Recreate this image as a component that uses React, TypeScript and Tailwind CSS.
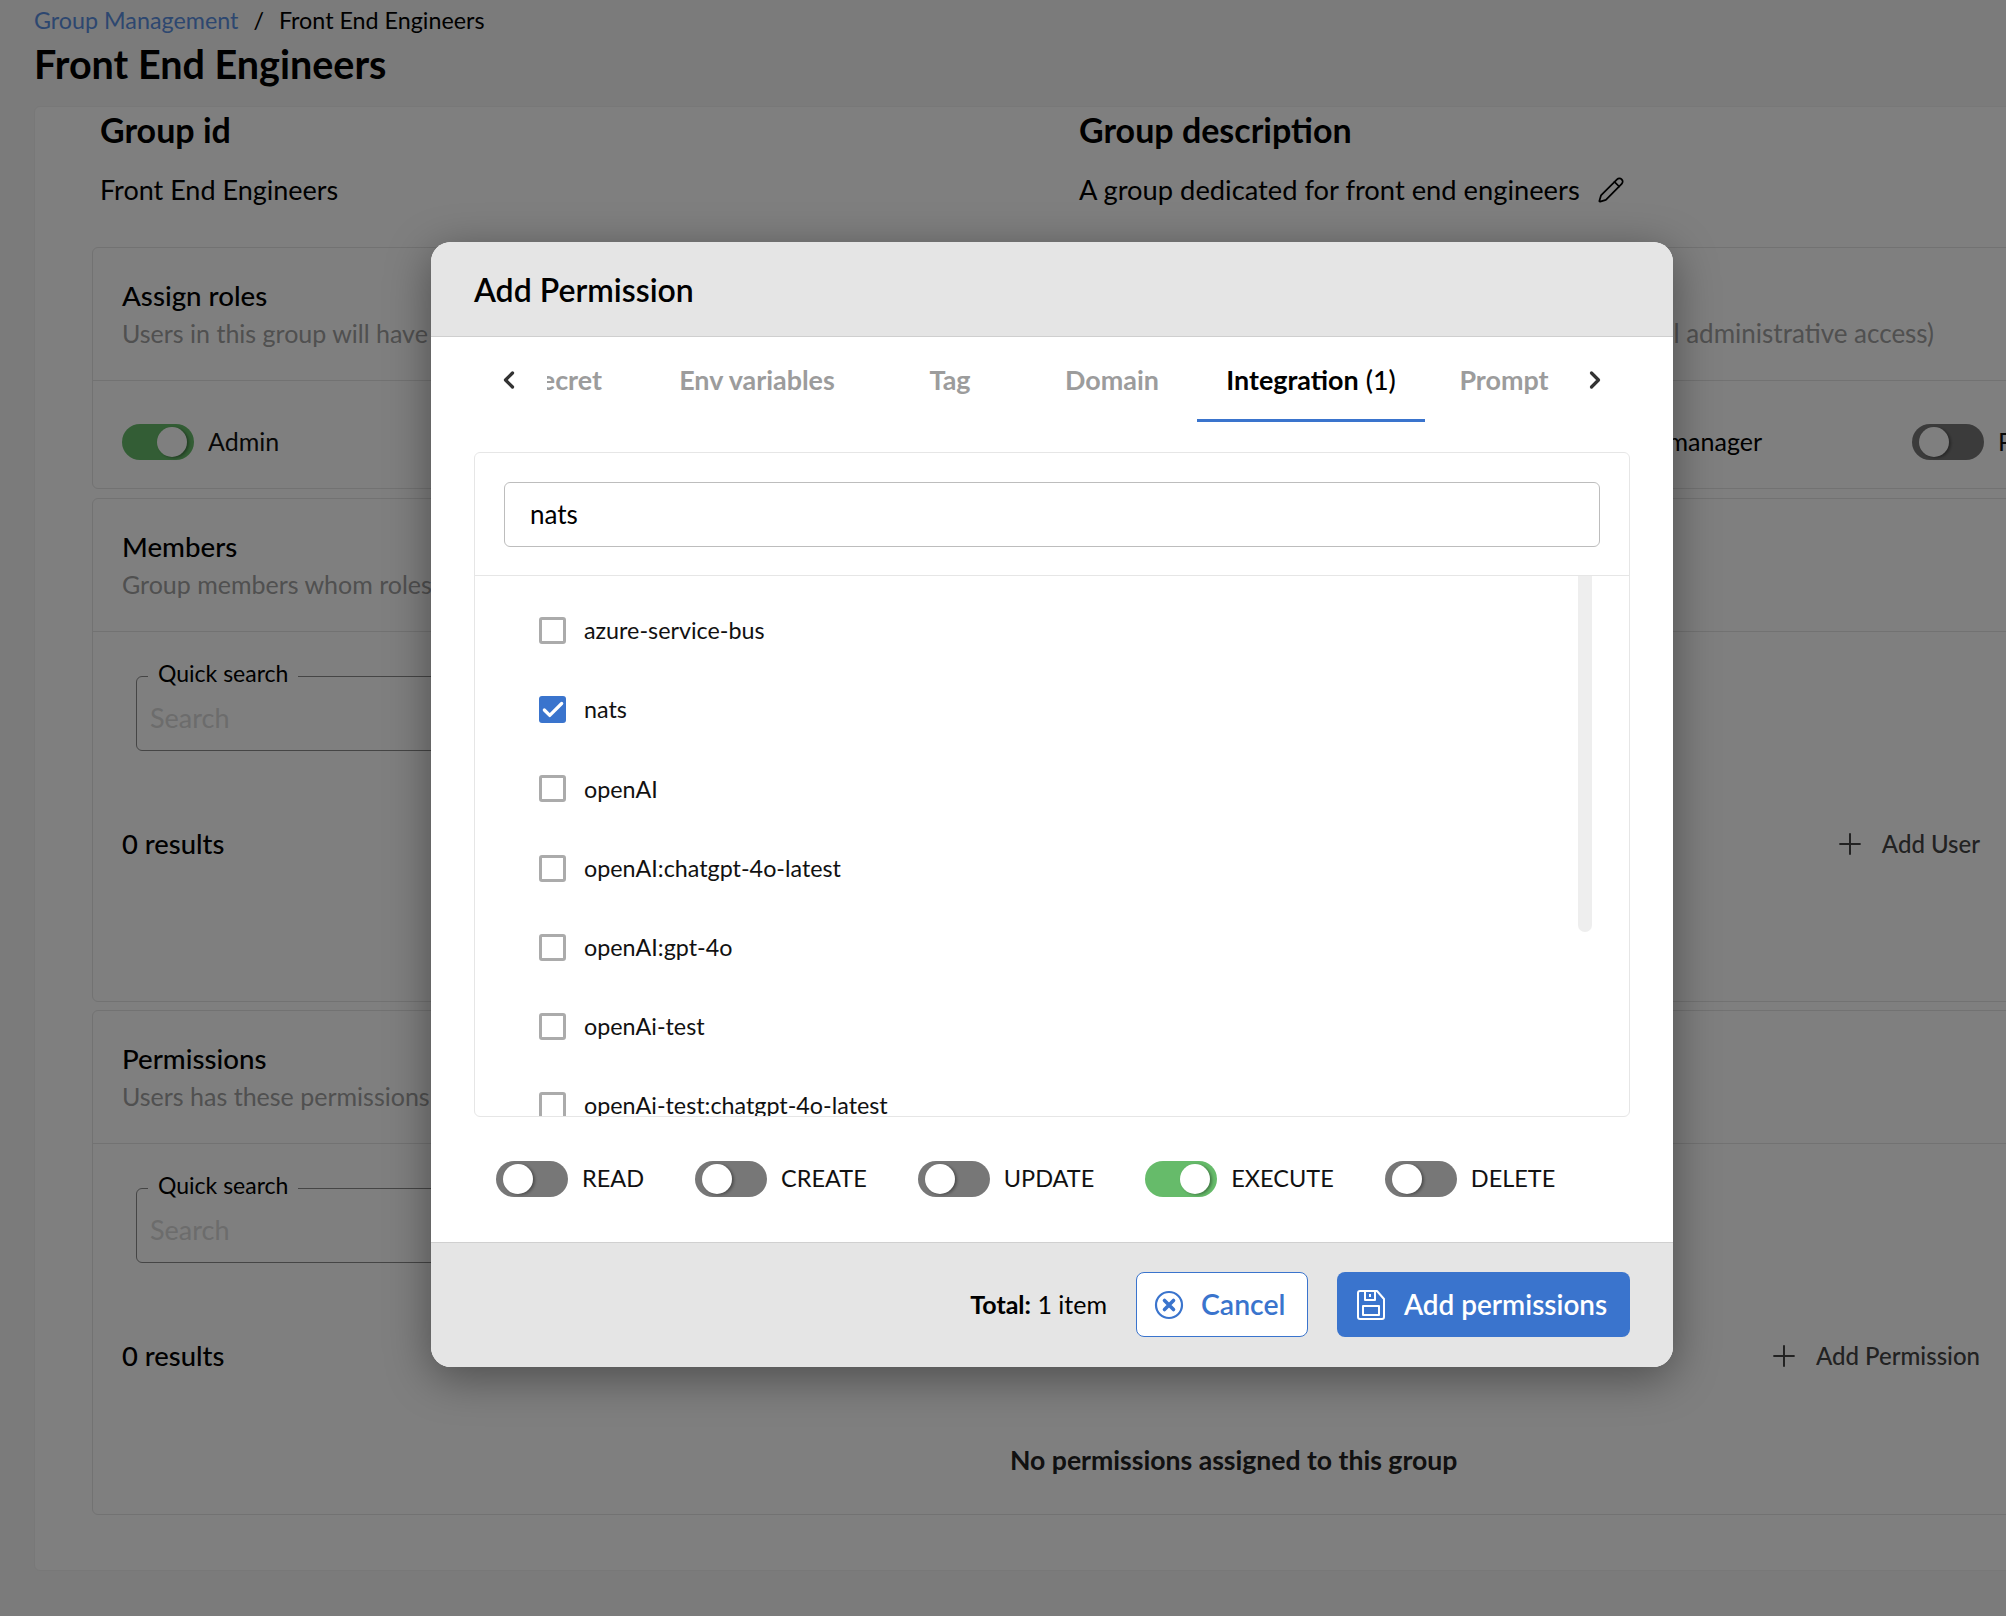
import { Check, ChevronLeft, ChevronRight, Pencil, Plus } from "lucide-react";

function Toggle({ on = false, label, size = "text-[23.5px]" }: { on?: boolean; label: string; size?: string }) {
  return (
    <div className="flex items-center gap-[14px] whitespace-nowrap">
      <span
        className={
          on
            ? "flex h-[36px] w-[72px] shrink-0 items-center justify-end rounded-full bg-[#66bb6a] px-[7px]"
            : "flex h-[36px] w-[72px] shrink-0 items-center justify-start rounded-full bg-[#777777] px-[7px]"
        }
      >
        <span className="h-[30px] w-[30px] rounded-full bg-white shadow-[2px_1px_3px_rgba(0,0,0,0.35)]" />
      </span>
      <span className={`${size} text-[#111]`}>{label}</span>
    </div>
  );
}

function SectionHead({ title, children }: { title: string; children: React.ReactNode }) {
  return (
    <div className="h-[133px] border-b border-[#e4e4e4] pt-[30px] pl-[29px]">
      <h3 className="h-[37px] text-[27.7px] leading-[36px] font-medium text-black">{title}</h3>
      <div className="h-[36px] text-[25px] leading-[36px] text-[#a0a0a0]">{children}</div>
    </div>
  );
}

function QuickSearch() {
  return (
    <fieldset className="mt-[29px] ml-[43px] h-[90px] w-[1400px] rounded-[6px] border border-[#8a8a8a]">
      <legend className="ml-[11px] px-[10px] pb-[6px] text-[23px] leading-[24px] text-black">Quick search</legend>
      <input
        placeholder="Search"
        className="mt-[2px] ml-[13px] h-[48px] w-[600px] text-[27px] outline-none placeholder:text-[#d8d8d8]"
      />
    </fieldset>
  );
}

function ResultsRow({ action }: { action: string }) {
  return (
    <div className="flex h-[40px] items-center justify-between pr-[71px] pl-[29px]">
      <span className="text-[27.4px] font-medium text-black">0 results</span>
      <span className="flex items-center gap-[15px] text-[24px] font-medium text-[#444]">
        <Plus size={34} strokeWidth={1.4} />
        {action}
      </span>
    </div>
  );
}

const tabs = [
  { name: "Secret", cls: "w-[94px] justify-end pr-[39px]" },
  { name: "Env variables", cls: "w-[232px] justify-center" },
  { name: "Tag", cls: "w-[154px] justify-center" },
  { name: "Domain", cls: "w-[170px] justify-center" },
  { name: "Integration", count: "(1)", cls: "w-[228px] justify-center gap-[7px] border-[#3a74cd] text-black", active: true },
  { name: "Prompt", cls: "w-[158px] justify-center" },
];

const integrations = [
  "azure-service-bus",
  "nats",
  "openAI",
  "openAI:chatgpt-4o-latest",
  "openAI:gpt-4o",
  "openAi-test",
  "openAi-test:chatgpt-4o-latest",
];

export default function App() {
  return (
    <div className="relative h-[1616px] w-[2006px] overflow-hidden bg-[#f6f6f6] [font-family:Lato,sans-serif]">
      <div className="h-[106px] pt-[6px] pl-[34px]">
        <div className="flex h-[28px] items-center text-[23.3px]">
          <span className="text-[#5b8fe0]">Group Management</span>
          <span className="mx-[15px] text-black">/</span>
          <span className="text-black">Front End Engineers</span>
        </div>
        <h1 className="mt-[10px] h-[40px] text-[39.5px] leading-[40px] font-bold text-black">Front End Engineers</h1>
      </div>

      <div className="ml-[34px] h-[1465px] w-[2100px] rounded-[6px] border border-[#f0f0f0] bg-white pl-[57px]">
        <div className="flex h-[140px]">
          <div className="w-[987px] pl-[8px]">
            <h2 className="h-[46px] text-[34px] leading-[46px] font-bold text-black">Group id</h2>
            <p className="mt-[19px] text-[27px] leading-[36px] text-black">Front End Engineers</p>
          </div>
          <div>
            <h2 className="h-[46px] text-[34px] leading-[46px] font-bold text-black">Group description</h2>
            <p className="mt-[19px] flex items-center gap-[17px] text-[27.3px] leading-[36px] text-black">
              A group dedicated for front end engineers
              <Pencil size={28} strokeWidth={1.5} />
            </p>
          </div>
        </div>

        <section className="h-[242px] w-[1960px] rounded-[6px] border border-[#e4e4e4]">
          <SectionHead title="Assign roles">
            <div className="flex w-[1812px] justify-between">
              <span>Users in this group will have these roles and permissions</span>
              <span className="text-[26px]">(with full administrative access)</span>
            </div>
          </SectionHead>
          <div className="flex h-[108px] items-center pt-[14px] pl-[29px]">
            <div className="flex w-[1640px] shrink-0 items-center justify-between">
              <Toggle on label="Admin" size="text-[25px]" />
              <span className="text-[25px] text-black">User manager</span>
            </div>
            <div className="ml-[150px] shrink-0">
              <Toggle label="Prompt manager" size="text-[25px]" />
            </div>
          </div>
        </section>

        <section className="mt-[9px] h-[504px] w-[1960px] rounded-[6px] border border-[#e4e4e4]">
          <SectionHead title="Members">Group members whom roles and permissions apply to</SectionHead>
          <QuickSearch />
          <div className="mt-[73px]">
            <ResultsRow action="Add User" />
          </div>
        </section>

        <section className="mt-[8px] h-[505px] w-[1960px] rounded-[6px] border border-[#e4e4e4]">
          <SectionHead title="Permissions">Users has these permissions in addition to the roles</SectionHead>
          <QuickSearch />
          <div className="mt-[73px]">
            <ResultsRow action="Add Permission" />
          </div>
          <p className="mt-[64px] ml-[917px] text-[26.6px] leading-[40px] font-bold text-[#222]">
            No permissions assigned to this group
          </p>
        </section>
      </div>

      <div className="absolute inset-0 bg-black/50" />

      <div className="absolute top-[242px] left-[431px] flex h-[1125px] w-[1242px] flex-col overflow-hidden rounded-[20px] bg-white shadow-[0_10px_45px_rgba(0,0,0,0.4)]">
        <div className="flex h-[95px] items-center border-b border-[#cfcfcf] bg-[#e5e5e5] pt-[2px] pl-[43px]">
          <h2 className="text-[32px] font-semibold text-black">Add Permission</h2>
        </div>

        <div className="flex h-[87px] items-start pl-[67px]">
          <div className="flex h-[85px] w-[22px] items-center">
            <ChevronLeft size={28} strokeWidth={2.8} className="-ml-[3px] shrink-0 text-[#333]" />
          </div>
          <div className="ml-[27px] flex w-[1036px] overflow-hidden">
            {tabs.map((tab) => (
              <div
                key={tab.name}
                className={`flex h-[85px] shrink-0 items-center border-b-[3px] pt-[4px] text-[26.9px] font-bold whitespace-nowrap ${
                  tab.active ? "" : "border-transparent text-[#9c9c9c]"
                } ${tab.cls}`}
              >
                {tab.name}
                {tab.count && <span className="font-medium">{tab.count}</span>}
              </div>
            ))}
          </div>
          <div className="flex h-[85px] w-[22px] items-center">
            <ChevronRight size={28} strokeWidth={2.8} className="-ml-[2px] shrink-0 text-[#333]" />
          </div>
        </div>

        <div className="mx-[43px] mt-[28px] h-[665px] overflow-hidden rounded-[6px] border border-[#e6e6e6]">
          <div className="flex h-[123px] items-center border-b border-[#e6e6e6] px-[29px]">
            <input
              defaultValue="nats"
              className="h-[65px] w-full rounded-[6px] border border-[#bdbdbd] px-[25px] text-[26px] text-black outline-none"
            />
          </div>
          <div className="relative h-[541px] overflow-hidden pt-[15px] pl-[64px]">
            {integrations.map((name) => (
              <div key={name} className="flex h-[79.2px] items-center gap-[18px]">
                {name === "nats" ? (
                  <span className="flex h-[27px] w-[27px] items-center justify-center rounded-[3px] bg-[#3a74cd]">
                    <Check size={26} strokeWidth={3} className="text-white" />
                  </span>
                ) : (
                  <span className="h-[27px] w-[27px] rounded-[3px] border-[3px] border-[#ababab]" />
                )}
                <span className="text-[23.3px] text-[#111]">{name}</span>
              </div>
            ))}
            <div className="absolute top-0 right-[37px] h-[356px] w-[14px] rounded-b-full bg-[#eeeeee]" />
          </div>
        </div>

        <div className="flex h-[125px] items-center gap-[51px] pb-[2px] pl-[65px]">
          <Toggle label="READ" />
          <Toggle label="CREATE" />
          <Toggle label="UPDATE" />
          <Toggle on label="EXECUTE" />
          <Toggle label="DELETE" />
        </div>

        <div className="flex h-[125px] items-center justify-end border-t border-[#d0d0d0] bg-[#e5e5e5] pr-[43px] pb-[1px]">
          <span className="text-[25px] text-black">
            <b className="font-bold">Total:</b> 1 item
          </span>
          <button className="ml-[29px] flex h-[65px] w-[172px] items-center gap-[17px] rounded-[8px] border border-[#3a74cd] bg-white pl-[17px] text-[28.4px] font-semibold text-[#3a74cd]">
            <svg width="30" height="30" viewBox="0 0 30 30" fill="none" stroke="currentColor">
              <circle cx="15" cy="15" r="13" strokeWidth="2.2" />
              <path d="M10.5 10.5l9 9M19.5 10.5l-9 9" strokeWidth="3.6" strokeLinecap="round" />
            </svg>
            Cancel
          </button>
          <button className="ml-[29px] flex h-[65px] w-[293px] items-center gap-[18px] rounded-[8px] bg-[#3a74cd] pl-[19px] text-[27.9px] font-semibold text-white">
            <svg width="30" height="32" viewBox="0 0 30 32" fill="none" stroke="currentColor" strokeWidth="2" strokeLinejoin="round">
              <path d="M4 2h17l7 8v18a2 2 0 0 1-2 2H4a2 2 0 0 1-2-2V4a2 2 0 0 1 2-2z" />
              <path d="M9 2v9h10V2M14 5v3" />
              <rect x="7" y="17" width="16" height="9" />
            </svg>
            Add permissions
          </button>
        </div>
      </div>
    </div>
  );
}
